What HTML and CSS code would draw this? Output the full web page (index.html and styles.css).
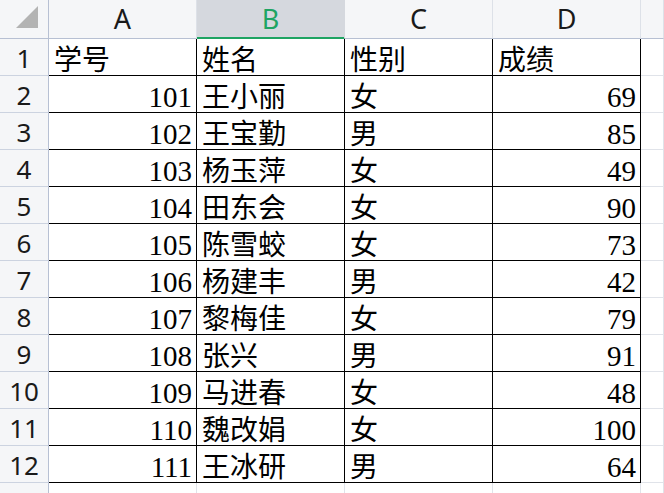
FILE: index.html
```html
<!DOCTYPE html>
<html lang="zh-CN">
<head>
<meta charset="utf-8">
<title>Sheet</title>
<link rel="stylesheet" href="styles.css">
</head>
<body>
<div class="sheet">
  <div class="corner"><svg width="48" height="38" viewBox="0 0 48 38"><polygon points="38,6 38,28 16,28" fill="#b3b3b3"/></svg></div>
  <div class="colh">A</div>
  <div class="colh sel">B</div>
  <div class="colh">C</div>
  <div class="colh">D</div>
  <div class="colh last"></div>

  <div class="rowh">1</div><div class="c"><span>学号</span></div><div class="c"><span>姓名</span></div><div class="c"><span>性别</span></div><div class="c"><span>成绩</span></div><div class="e"></div>
  <div class="rowh">2</div><div class="c n"><span>101</span></div><div class="c"><span>王小丽</span></div><div class="c"><span>女</span></div><div class="c n"><span>69</span></div><div class="e"></div>
  <div class="rowh">3</div><div class="c n"><span>102</span></div><div class="c"><span>王宝勤</span></div><div class="c"><span>男</span></div><div class="c n"><span>85</span></div><div class="e"></div>
  <div class="rowh">4</div><div class="c n"><span>103</span></div><div class="c"><span>杨玉萍</span></div><div class="c"><span>女</span></div><div class="c n"><span>49</span></div><div class="e"></div>
  <div class="rowh">5</div><div class="c n"><span>104</span></div><div class="c"><span>田东会</span></div><div class="c"><span>女</span></div><div class="c n"><span>90</span></div><div class="e"></div>
  <div class="rowh">6</div><div class="c n"><span>105</span></div><div class="c"><span>陈雪蛟</span></div><div class="c"><span>女</span></div><div class="c n"><span>73</span></div><div class="e"></div>
  <div class="rowh">7</div><div class="c n"><span>106</span></div><div class="c"><span>杨建丰</span></div><div class="c"><span>男</span></div><div class="c n"><span>42</span></div><div class="e"></div>
  <div class="rowh">8</div><div class="c n"><span>107</span></div><div class="c"><span>黎梅佳</span></div><div class="c"><span>女</span></div><div class="c n"><span>79</span></div><div class="e"></div>
  <div class="rowh">9</div><div class="c n"><span>108</span></div><div class="c"><span>张兴</span></div><div class="c"><span>男</span></div><div class="c n"><span>91</span></div><div class="e"></div>
  <div class="rowh">10</div><div class="c n"><span>109</span></div><div class="c"><span>马进春</span></div><div class="c"><span>女</span></div><div class="c n"><span>48</span></div><div class="e"></div>
  <div class="rowh">11</div><div class="c n"><span>110</span></div><div class="c"><span>魏改娟</span></div><div class="c"><span>女</span></div><div class="c n"><span>100</span></div><div class="e"></div>
  <div class="rowh">12</div><div class="c n"><span>111</span></div><div class="c"><span>王冰研</span></div><div class="c"><span>男</span></div><div class="c n"><span>64</span></div><div class="e"></div>
  <div class="rowh">13</div><div class="e"></div><div class="e"></div><div class="e"></div><div class="e"></div><div class="e"></div>
</div>
</body>
</html>
```

FILE: styles.css
```css
html, body {
  margin: 0;
  padding: 0;
  background: #ffffff;
  overflow: hidden;
}
.sheet {
  display: grid;
  grid-template-columns: 49px 148px 148px 148px 148px 1fr;
  grid-template-rows: 39px repeat(13, 37px);
  width: 664px;
  height: 493px;
  overflow: hidden;
}
.sheet > div {
  box-sizing: border-box;
  overflow: hidden;
}
.corner {
  background: #f5f6f8;
  border-right: 1px solid #b7c0d3;
  border-bottom: 1px solid #b7c0d3;
}
.corner svg { display: block; }
.colh {
  background: #f5f6f8;
  border-right: 1px solid #dde1e8;
  border-bottom: 1px solid #b7c0d3;
  font-family: "Noto Sans", "Open Sans", sans-serif;
  font-size: 27px;
  color: #1a1a1a;
  display: flex;
  align-items: center;
  justify-content: center;
  padding-bottom: 2px;
}
.colh.sel {
  background: #d5d8de;
  color: #1fa463;
  border-bottom: 1px solid #1fa463;
  box-shadow: inset 0 -1px 0 #1fa463;
  border-right-color: #d5d8de;
}
.rowh {
  background: #f5f6f8;
  border-right: 1px solid #b7c0d3;
  border-bottom: 1px solid #ccd3e0;
  font-family: "Noto Sans", "Open Sans", sans-serif;
  font-size: 26px;
  color: #1a1a1a;
  display: flex;
  align-items: center;
  justify-content: center;
  padding-top: 2px;
}
.c {
  border-right: 1px solid #000000;
  border-bottom: 1px solid #000000;
  font-family: "Liberation Serif", "Noto Sans CJK SC", serif;
  font-size: 28px;
  color: #000000;
  display: flex;
  align-items: flex-end;
  justify-content: flex-start;
  padding: 0 4px 0 5px;
}
.c span {
  line-height: 1;
  white-space: nowrap;
}
.c.n {
  justify-content: flex-end;
  font-size: 29px;
}
.e {
  border-right: 1px solid #e0e3e9;
  border-bottom: 1px solid #e0e3e9;
}
```
